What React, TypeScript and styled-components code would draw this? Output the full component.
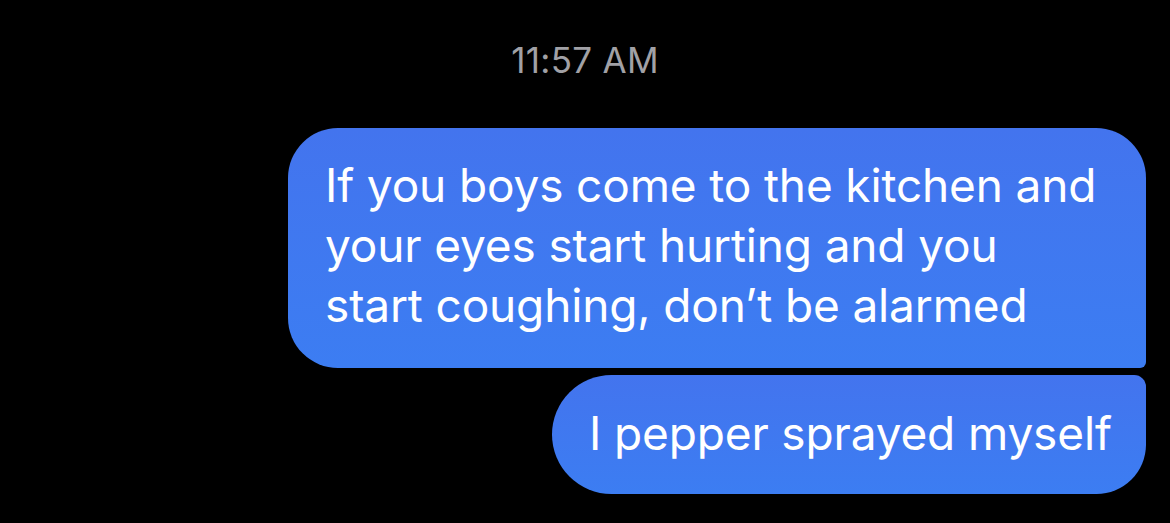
import styled, { createGlobalStyle } from 'styled-components';

const GlobalStyle = createGlobalStyle`
  html, body {
    margin: 0;
    padding: 0;
    background: #000;
  }

  body {
    font-family: Inter, "Noto Sans", "Liberation Sans", sans-serif;
    -webkit-font-smoothing: antialiased;
  }
`;

const Thread = styled.div`
  display: flex;
  flex-direction: column;
  align-items: flex-end;
  width: 1170px;
  height: 523px;
  padding: 40px 24px 0 0;
  box-sizing: border-box;
  background: #000;
  overflow: hidden;
`;

const Timestamp = styled.div`
  align-self: center;
  margin-left: 24px;
  color: #a1a1a6;
  font-size: 35px;
  line-height: 40px;
  letter-spacing: 0.3px;
  margin-bottom: 48px;
`;

const Bubble = styled.div<{ $width: number; $first?: boolean }>`
  box-sizing: border-box;
  width: ${(p) => p.$width}px;
  padding: 27px 30px 33px 37px;
  color: #fff;
  font-size: 46px;
  line-height: 60px;
  letter-spacing: -0.15px;
  background: linear-gradient(180deg, #4374ee 0%, #3c7df2 100%);
  border-radius: ${(p) => (p.$first ? '50px 50px 6px 50px' : '60px 12px 50px 60px')};

  & + & {
    margin-top: 7px;
  }
`;

const SingleLine = styled(Bubble)`
  padding: 28px 30px 31px 37px;
`;

export default function App() {
  return (
    <>
      <GlobalStyle />
      <Thread>
        <Timestamp>11:57 AM</Timestamp>
        <Bubble $width={858} $first>
          If you boys come to the kitchen and
          <br />
          your eyes start hurting and you
          <br />
          start coughing, don’t be alarmed
        </Bubble>
        <SingleLine $width={594}>I pepper sprayed myself</SingleLine>
      </Thread>
    </>
  );
}
